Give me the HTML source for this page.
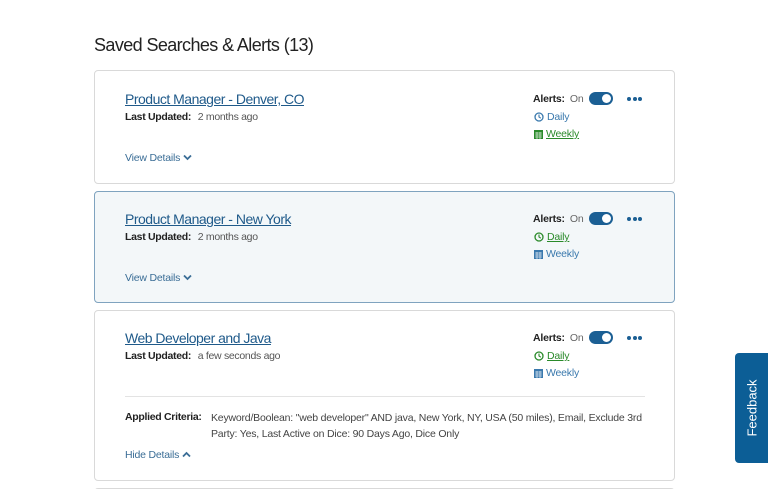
<!DOCTYPE html>
<html><head><style>
*{margin:0;padding:0;box-sizing:border-box}
html,body{width:768px;height:489px;overflow:hidden}
body{background:#fff;font-family:"Liberation Sans",sans-serif;color:#333;position:relative}
.h{position:absolute;left:94px;top:35px;font-size:18px;color:#222;letter-spacing:-0.6px}
.card{position:absolute;left:94px;width:581px;border:1px solid #d9d9d9;border-radius:4px;background:#fff}
.card.sel{background:#f3f7f9;border-color:#7fa3bf}
.t{position:absolute;left:30px;font-size:14px;color:#1f5a8a;text-decoration:underline;letter-spacing:-0.5px;white-space:nowrap}
.lu{position:absolute;left:30px;font-size:10.5px;color:#555;white-space:nowrap;letter-spacing:-0.3px}
.lu b{color:#222;margin-right:4px}
.vd{position:absolute;left:30px;font-size:10.5px;color:#3a6d96;white-space:nowrap;letter-spacing:-0.2px}
.al{position:absolute;left:438px;font-size:10.5px;white-space:nowrap;letter-spacing:-0.2px}
.al b{color:#222;font-weight:bold}
.al span{color:#666;margin-left:5px}
.tg{position:absolute;left:494px;width:24px;height:13px;border-radius:7px;background:#1b5f94}
.tg:after{content:"";position:absolute;right:2px;top:2px;width:9px;height:9px;border-radius:50%;background:#fff}
.dots{position:absolute;left:532px;width:15px;height:4px;display:flex;justify-content:space-between}
.dots i{width:4px;height:4px;border-radius:50%;background:#1b5f94}
.d{position:absolute;left:439px;font-size:10.5px;white-space:nowrap;letter-spacing:-0.2px;display:flex;align-items:center;gap:3px}
.blue{color:#3a79ad}.green{color:#2a8a2a}
.u{text-decoration:underline}
.fb{position:absolute;left:735px;top:353px;width:33px;height:110px;background:#0c5e96;border-radius:4px 0 0 4px}
.fb span{position:absolute;left:50%;top:50%;transform:translate(-50%,-50%) rotate(-90deg);color:#fff;font-size:13px;white-space:nowrap}
</style></head><body>
<div class="h">Saved Searches &amp; Alerts (13)</div>

<div class="card" style="top:70px;height:114px">
 <div class="t" style="top:20px">Product Manager - Denver, CO</div>
 <div class="lu" style="top:40px"><b>Last Updated:</b> 2 months ago</div>
 <div class="vd" style="top:81px">View Details <svg width="9" height="7" viewBox="0 0 9 7"><path d="M1 1.5l3.5 3.5 3.5-3.5" stroke="#3a6d96" stroke-width="1.8" fill="none"/></svg></div>
 <div class="al" style="top:22px"><b>Alerts:</b><span>On</span></div>
 <div class="tg" style="top:21px"></div>
 <div class="dots" style="top:26px"><i></i><i></i><i></i></div>
 <div class="d blue" style="top:40px"><svg width="10" height="10" viewBox="0 0 10 10"><circle cx="5" cy="5" r="4" stroke="#3a79ad" stroke-width="1.3" fill="none"/><path d="M5 2.5V5l1.8 1.2" stroke="#3a79ad" stroke-width="1.1" fill="none"/></svg>Daily</div>
 <div class="d green" style="top:57px"><svg width="9" height="10" viewBox="0 0 9 10"><rect x="0" y="1" width="9" height="9" fill="#2a8a2a"/><path d="M1 4h7M1 6h7M1 8h7M3 3v7M6 3v7" stroke="#fff" stroke-width=".6"/></svg><span class="u">Weekly</span></div>
</div>

<div class="card sel" style="top:191px;height:112px">
 <div class="t" style="top:19px">Product Manager - New York</div>
 <div class="lu" style="top:39px"><b>Last Updated:</b> 2 months ago</div>
 <div class="vd" style="top:80px">View Details <svg width="9" height="7" viewBox="0 0 9 7"><path d="M1 1.5l3.5 3.5 3.5-3.5" stroke="#3a6d96" stroke-width="1.8" fill="none"/></svg></div>
 <div class="al" style="top:21px"><b>Alerts:</b><span>On</span></div>
 <div class="tg" style="top:20px"></div>
 <div class="dots" style="top:25px"><i></i><i></i><i></i></div>
 <div class="d green" style="top:39px"><svg width="10" height="10" viewBox="0 0 10 10"><circle cx="5" cy="5" r="4" stroke="#2a8a2a" stroke-width="1.3" fill="none"/><path d="M5 2.5V5l1.8 1.2" stroke="#2a8a2a" stroke-width="1.1" fill="none"/></svg><span class="u">Daily</span></div>
 <div class="d blue" style="top:56px"><svg width="9" height="10" viewBox="0 0 9 10"><rect x="0" y="1" width="9" height="9" fill="#3a79ad"/><path d="M1 4h7M1 6h7M1 8h7M3 3v7M6 3v7" stroke="#fff" stroke-width=".6"/></svg>Weekly</div>
</div>

<div class="card" style="top:310px;height:171px">
 <div class="t" style="top:19px">Web Developer and Java</div>
 <div class="lu" style="top:39px"><b>Last Updated:</b> a few seconds ago</div>
 <div class="al" style="top:21px"><b>Alerts:</b><span>On</span></div>
 <div class="tg" style="top:20px"></div>
 <div class="dots" style="top:25px"><i></i><i></i><i></i></div>
 <div class="d green" style="top:39px"><svg width="10" height="10" viewBox="0 0 10 10"><circle cx="5" cy="5" r="4" stroke="#2a8a2a" stroke-width="1.3" fill="none"/><path d="M5 2.5V5l1.8 1.2" stroke="#2a8a2a" stroke-width="1.1" fill="none"/></svg><span class="u">Daily</span></div>
 <div class="d blue" style="top:56px"><svg width="9" height="10" viewBox="0 0 9 10"><rect x="0" y="1" width="9" height="9" fill="#3a79ad"/><path d="M1 4h7M1 6h7M1 8h7M3 3v7M6 3v7" stroke="#fff" stroke-width=".6"/></svg>Weekly</div>
 <div style="position:absolute;left:30px;top:85px;width:520px;height:1px;background:#e3e3e3"></div>
 <div class="lu" style="top:100px"><b style="margin:0">Applied Criteria:</b></div>
 <div style="position:absolute;left:116px;top:99px;width:440px;font-size:10.5px;line-height:16px;color:#444;letter-spacing:-0.2px;white-space:nowrap">Keyword/Boolean: "web developer" AND java, New York, NY, USA (50 miles), Email, Exclude 3rd<br>Party: Yes, Last Active on Dice: 90 Days Ago, Dice Only</div>
 <div class="vd" style="top:138px">Hide Details <svg width="9" height="7" viewBox="0 0 9 7"><path d="M1 5.5l3.5-3.5 3.5 3.5" stroke="#3a6d96" stroke-width="1.8" fill="none"/></svg></div>
</div>

<div class="card" style="top:488px;height:20px"></div>

<div class="fb"><span>Feedback</span></div>
</body></html>
